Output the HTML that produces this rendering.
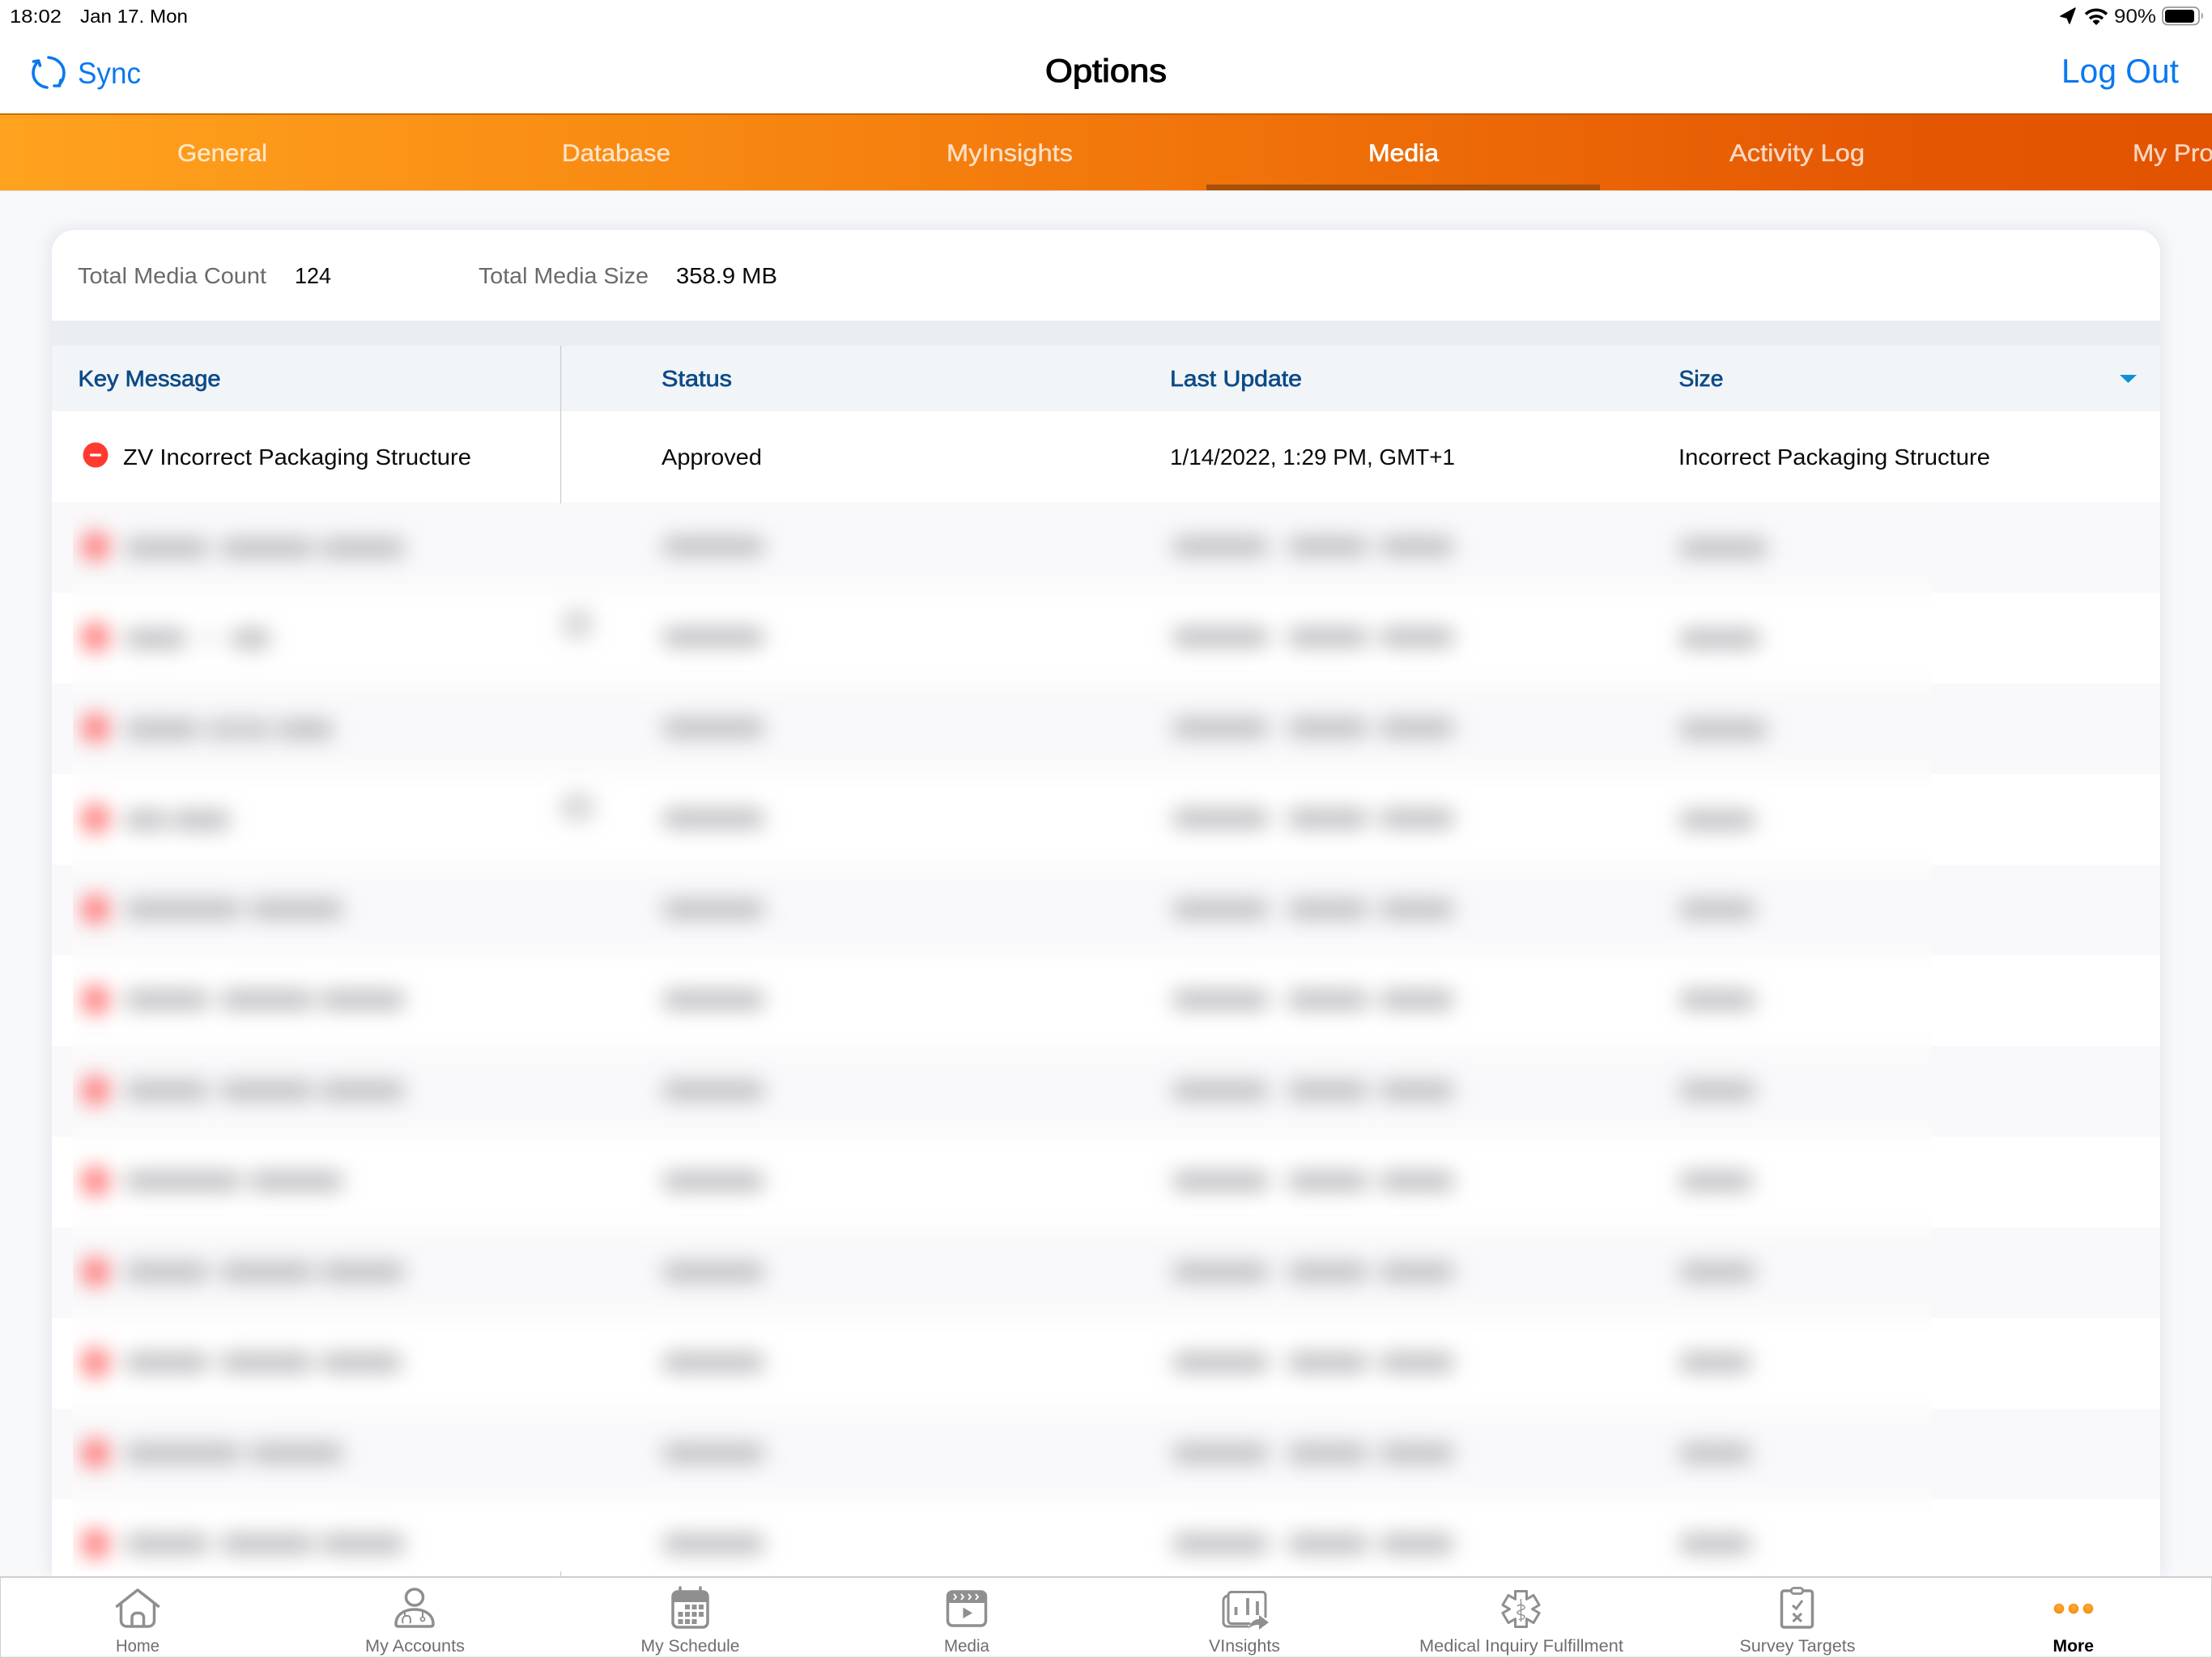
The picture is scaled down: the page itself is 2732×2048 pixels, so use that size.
<!DOCTYPE html>
<html lang="en"><head><meta charset="utf-8"><title>Options</title>
<style>
html,body{margin:0;padding:0;width:2732px;height:2048px;overflow:hidden;background:#f8f9fb}
svg{display:block}
text{font-family:"Liberation Sans",sans-serif}
.ic{fill:none;stroke:#8f8f8f;stroke-width:3.5;stroke-linecap:round;stroke-linejoin:round}
.tl{font-size:21px;fill:#6e6e6e}
.hd{font-size:28px;fill:#0c4b87;stroke:#0c4b87;stroke-width:.7}
.bd{font-size:28px;fill:#0a0a0a}
.st{font-size:28px;fill:#6a6a6a}
.tb{font-size:30px;fill:#fff;fill-opacity:.75;stroke:#fff;stroke-opacity:.55;stroke-width:.5}
</style></head><body>
<svg xmlns="http://www.w3.org/2000/svg" width="2732" height="2048" viewBox="0 0 2732 2048">
<defs>
<linearGradient id="o" x1="0" x2="1" y1="0" y2="0">
<stop offset="0" stop-color="#ffa31f"/><stop offset=".3" stop-color="#f88a12"/><stop offset=".6" stop-color="#ef6f09"/><stop offset=".88" stop-color="#e45602"/><stop offset="1" stop-color="#e35400"/>
</linearGradient>
<radialGradient id="dot" cx=".5" cy=".4" r=".6"><stop offset="0" stop-color="#ffae38"/><stop offset="1" stop-color="#f58a10"/></radialGradient>
<filter id="b" filterUnits="userSpaceOnUse" x="0" y="500" width="2732" height="1600"><feGaussianBlur stdDeviation="13"/></filter>
<filter id="b2" filterUnits="userSpaceOnUse" x="0" y="500" width="2732" height="1600"><feGaussianBlur stdDeviation="14"/></filter>
<filter id="sh" filterUnits="userSpaceOnUse" x="0" y="200" width="2732" height="1900"><feGaussianBlur stdDeviation="10"/></filter>
<clipPath id="cp"><rect x="90" y="622" width="2295" height="1319"/></clipPath>
<clipPath id="cc"><path d="M64 1947V312a28 28 0 0 1 28-28H2640a28 28 0 0 1 28 28V1947Z"/></clipPath>
<g id="co">
<circle cx="118" cy="0" r="17" fill="#ff6868" stroke="none"/>
<rect x="820" y="-10" width="122" height="20" rx="8" fill="#bebec1"/>
<rect x="1450" y="-10" width="115" height="20" rx="8" fill="#bebec1"/>
<rect x="1592" y="-10" width="96" height="20" rx="8" fill="#bebec1"/>
<rect x="1706" y="-10" width="88" height="20" rx="8" fill="#bebec1"/>
</g>
<g id="k1"><rect x="156" y="-10" width="100" height="20" rx="8" fill="#bebec1"/><rect x="274" y="-10" width="112" height="20" rx="8" fill="#bebec1"/><rect x="398" y="-10" width="100" height="20" rx="8" fill="#bebec1"/></g>
<g id="k2"><rect x="156" y="-10" width="140" height="20" rx="8" fill="#bebec1"/><rect x="310" y="-10" width="112" height="20" rx="8" fill="#bebec1"/></g>
</defs>

<!-- status and nav -->
<rect width="2732" height="140" fill="#fff"/>
<text x="12" y="28" font-size="23" fill="#000" textLength="64" lengthAdjust="spacingAndGlyphs">18:02</text>
<text x="99" y="28" font-size="23" fill="#000" textLength="133" lengthAdjust="spacingAndGlyphs">Jan 17. Mon</text>
<path d="M2545 20 2563 10 2556 29 2553 22Z" fill="#000" stroke="#000" stroke-width="1.5" stroke-linejoin="round"/>
<path d="M2576 17.500a19 19 0 0 1 26 0M2581 23a12 12 0 0 1 16 0" fill="none" stroke="#000" stroke-width="3.600"/>
<path d="M2584.500 26.500a6 6 0 0 1 9 0L2589 31Z" fill="#000"/>
<text x="2611" y="28" font-size="24" fill="#111" textLength="52" lengthAdjust="spacingAndGlyphs">90%</text>
<rect x="2671" y="9" width="45" height="21.500" rx="6" fill="none" stroke="#9a9a9a" stroke-width="1.800"/>
<rect x="2674" y="12" width="36" height="16" rx="3.500" fill="#000"/>
<path d="M2719 15.500c2.500 .8 2.500 7.200 0 8Z" fill="#9a9a9a"/>

<g fill="none" stroke="#0a78f0" stroke-width="3.600" stroke-linecap="round" stroke-linejoin="round">
<path d="M47 76C42 81 41 86 41 90 41 100 49 107 58 108"/>
<path d="M41.500 76 47.500 75 49.500 81"/>
<path d="M60 71C71 72 79 80 79 90 79 96 77 100 73 105"/>
<path d="M67 106 73.500 106 75 99"/>
</g>
<text x="96" y="103" font-size="37" fill="#0a78f0" textLength="78" lengthAdjust="spacingAndGlyphs">Sync</text>
<text x="1291" y="101" font-size="40" fill="#000" stroke="#000" stroke-width="1.100" textLength="150" lengthAdjust="spacingAndGlyphs">Options</text>
<text x="2546" y="102" font-size="42" fill="#0a78f0" textLength="145" lengthAdjust="spacingAndGlyphs">Log Out</text>

<!-- tabs -->
<rect y="140" width="2732" height="95" fill="url(#o)"/>
<rect y="140" width="2732" height="2" fill="#a85408" opacity=".65"/>
<rect y="235" width="2732" height="1" fill="#d9c4b0" opacity=".8"/>
<rect x="1490" y="228" width="486" height="7" fill="#a84f08"/>
<text class="tb" x="219" y="199" textLength="111" lengthAdjust="spacingAndGlyphs">General</text>
<text class="tb" x="694" y="199" textLength="134" lengthAdjust="spacingAndGlyphs">Database</text>
<text class="tb" x="1169" y="199" textLength="156" lengthAdjust="spacingAndGlyphs">MyInsights</text>
<text x="1690" y="199" font-size="30" fill="#fff" stroke="#fff" stroke-width=".7" textLength="87" lengthAdjust="spacingAndGlyphs">Media</text>
<text class="tb" x="2136" y="199" textLength="167" lengthAdjust="spacingAndGlyphs">Activity Log</text>
<text class="tb" x="2634" y="199" textLength="100" lengthAdjust="spacingAndGlyphs">My Pro</text>

<!-- page background shadow -->
<rect y="236" width="2732" height="1711" fill="#f8f9fb"/>
<path d="M60 1947V308a26 26 0 0 1 26-26H2646a26 26 0 0 1 26 26V1947Z" fill="#dfe2e7" filter="url(#sh)" opacity=".8"/>

<!-- card -->
<g clip-path="url(#cc)">
<rect x="64" y="284" width="2604" height="112" fill="#fff"/>
<rect x="64" y="396" width="2604" height="31" fill="#ebeef1"/>
<rect x="64" y="427" width="2604" height="81" fill="#f2f5f8"/>
<rect x="64" y="508" width="2604" height="1439" fill="#fff"/>
<g fill="#f9f9fb">
<rect x="64" y="620" width="2604" height="112"/><rect x="64" y="844" width="2604" height="112"/><rect x="64" y="1068" width="2604" height="112"/><rect x="64" y="1292" width="2604" height="112"/><rect x="64" y="1516" width="2604" height="112"/><rect x="64" y="1740" width="2604" height="112"/>
</g>
</g>

<text class="st" x="96" y="350" textLength="233" lengthAdjust="spacingAndGlyphs">Total Media Count</text>
<text class="bd" x="364" y="350" textLength="45" lengthAdjust="spacingAndGlyphs">124</text>
<text class="st" x="591" y="350" textLength="210" lengthAdjust="spacingAndGlyphs">Total Media Size</text>
<text class="bd" x="835" y="350" textLength="125" lengthAdjust="spacingAndGlyphs">358.9 MB</text>

<text class="hd" x="96.500" y="477" textLength="176" lengthAdjust="spacingAndGlyphs">Key Message</text>
<text class="hd" x="817" y="477" textLength="87" lengthAdjust="spacingAndGlyphs">Status</text>
<text class="hd" x="1445" y="477" textLength="163" lengthAdjust="spacingAndGlyphs">Last Update</text>
<text class="hd" x="2073.500" y="477" textLength="55" lengthAdjust="spacingAndGlyphs">Size</text>
<path d="M2618 463H2639L2628.500 473Z" fill="#0f8fd8"/>
<rect x="692" y="427" width="1.200" height="197" fill="#c8ccd0"/>

<circle cx="118" cy="562" r="15.500" fill="#ff3b30"/>
<rect x="111" y="560.500" width="14" height="3.200" rx="1.500" fill="#fff"/>
<text class="bd" x="152" y="574" textLength="430" lengthAdjust="spacingAndGlyphs">ZV Incorrect Packaging Structure</text>
<text class="bd" x="817" y="574" textLength="124" lengthAdjust="spacingAndGlyphs">Approved</text>
<text class="bd" x="1445" y="574" textLength="352" lengthAdjust="spacingAndGlyphs">1/14/2022, 1:29 PM, GMT+1</text>
<text class="bd" x="2073" y="574" textLength="385" lengthAdjust="spacingAndGlyphs">Incorrect Packaging Structure</text>

<!-- blurred rows -->
<g clip-path="url(#cp)">
<rect x="90" y="622" width="2295" height="1319" fill="#fff"/>
<g filter="url(#b2)" fill="#f9f9fb">
<rect x="0" y="600" width="2732" height="132"/><rect x="0" y="844" width="2732" height="112"/><rect x="0" y="1068" width="2732" height="112"/><rect x="0" y="1292" width="2732" height="112"/><rect x="0" y="1516" width="2732" height="112"/><rect x="0" y="1740" width="2732" height="112"/>
</g>
<g filter="url(#b)" stroke="#bebec1" stroke-width="4">
<use href="#co" y="675"/><use href="#k1" y="677"/><rect x="2076" y="667" width="105" height="20" rx="8" fill="#bebec1"/>
<use href="#co" y="787"/><rect x="156" y="779" width="72" height="20" rx="8" fill="#bebec1"/><rect x="245" y="783" width="30" height="12" rx="6" fill="#e6e6e6" stroke="none"/><rect x="288" y="779" width="44" height="20" rx="8" fill="#bebec1"/><rect x="2076" y="779" width="96" height="20" rx="8" fill="#bebec1"/>
<rect x="694" y="753" width="38" height="36" rx="12" fill="#d7d7d7" stroke="none"/>
<use href="#co" y="899"/><rect x="156" y="891" width="88" height="20" rx="8" fill="#bebec1"/><rect x="256" y="891" width="80" height="20" rx="8" fill="#cbcbce"/><rect x="346" y="891" width="64" height="20" rx="8" fill="#bebec1"/><rect x="2076" y="891" width="105" height="20" rx="8" fill="#bebec1"/>
<use href="#co" y="1011"/><rect x="156" y="1003" width="48" height="20" rx="8" fill="#bebec1"/><rect x="214" y="1003" width="68" height="20" rx="8" fill="#bebec1"/><rect x="2076" y="1003" width="90" height="20" rx="8" fill="#bebec1"/>
<rect x="692" y="980" width="42" height="34" rx="12" fill="#d7d7d7" stroke="none"/>
<use href="#co" y="1123"/><use href="#k2" y="1123"/><rect x="2076" y="1113" width="90" height="20" rx="8" fill="#bebec1"/>
<use href="#co" y="1235"/><use href="#k1" y="1235"/><rect x="2076" y="1225" width="90" height="20" rx="8" fill="#bebec1"/>
<use href="#co" y="1347"/><use href="#k1" y="1347"/><rect x="2076" y="1337" width="90" height="20" rx="8" fill="#bebec1"/>
<use href="#co" y="1459"/><use href="#k2" y="1459"/><rect x="2076" y="1449" width="87" height="20" rx="8" fill="#bebec1"/>
<use href="#co" y="1571"/><use href="#k1" y="1571"/><rect x="2076" y="1561" width="90" height="20" rx="8" fill="#bebec1"/>
<use href="#co" y="1683"/><rect x="156" y="1673" width="100" height="20" rx="8" fill="#bebec1"/><rect x="274" y="1673" width="110" height="20" rx="8" fill="#bebec1"/><rect x="398" y="1673" width="96" height="20" rx="8" fill="#bebec1"/><rect x="2076" y="1673" width="85" height="20" rx="8" fill="#bebec1"/>
<use href="#co" y="1795"/><use href="#k2" y="1795"/><rect x="2076" y="1785" width="85" height="20" rx="8" fill="#bebec1"/>
<use href="#co" y="1907"/><use href="#k1" y="1907"/><rect x="2076" y="1897" width="85" height="20" rx="8" fill="#bebec1"/>
</g>
</g>
<rect x="692" y="1941" width="1.200" height="6" fill="#c8ccd0"/>

<!-- bottom tab bar -->
<rect y="1947" width="2732" height="101" fill="#fff"/>
<rect y="1947" width="2732" height="2" fill="#cfcfcf"/>
<rect y="2046.500" width="2732" height="1.500" fill="#cfcfcf"/>
<rect y="1947" width="1" height="101" fill="#cfcfcf"/>
<rect x="2731" y="1947" width="1" height="101" fill="#cfcfcf"/>

<!-- home -->
<path class="ic" d="M144.500 1984 170 1964 195.500 1984M149.500 1981V2002a7 7 0 0 0 7 7H183.500a7 7 0 0 0 7-7V1981M163 2009V1998a5.500 5.500 0 0 1 5.500-5.500H172a5.500 5.500 0 0 1 5.500 5.500V2009"/>
<!-- accounts -->
<ellipse class="ic" cx="512" cy="1973" rx="10.500" ry="10"/>
<path class="ic" d="M489 2006C489 1994 500 1988 512 1988S535 1994 535 2006C535 2009 533 2009 531 2009H493C491 2009 489 2009 489 2006Z"/>
<path d="M500 1990V1996C496 1999 497 2004 498 2005M505 1996C508 1999 507 2004 506 2005M500 1996H505M522 1990V1998" fill="none" stroke="#8f8f8f" stroke-width="2"/>
<circle cx="522" cy="2000" r="2.500" fill="none" stroke="#8f8f8f" stroke-width="1.800"/>
<!-- schedule -->
<path d="M840 1961v6M865 1961v6" stroke="#8f8f8f" stroke-width="3.500" stroke-linecap="round"/>
<rect class="ic" x="831" y="1966" width="43" height="44" rx="6"/>
<path d="M830 1979V1971a6 6 0 0 1 6-6H869a6 6 0 0 1 6 6V1979Z" fill="#8f8f8f"/>
<g fill="#929292"><rect x="846" y="1982" width="6" height="6"/><rect x="854.500" y="1982" width="6" height="6"/><rect x="863" y="1982" width="6" height="6"/><rect x="837.500" y="1991" width="6" height="6"/><rect x="846" y="1991" width="6" height="6"/><rect x="854.500" y="1991" width="6" height="6"/><rect x="863" y="1991" width="6" height="6"/><rect x="837.500" y="2000" width="6" height="6"/><rect x="846" y="2000" width="6" height="6"/><rect x="854.500" y="2000" width="6" height="6"/></g>
<!-- media -->
<rect class="ic" x="1170.500" y="1966" width="47" height="42" rx="6"/>
<path d="M1169 1980V1971a6 6 0 0 1 6-6H1213a6 6 0 0 1 6 6V1980Z" fill="#8f8f8f"/>
<path d="M1178 1969l3 3.500-3 3.500M1187 1969l3 3.500-3 3.500M1196 1969l3 3.500-3 3.500M1205 1969l3 3.500-3 3.500" fill="none" stroke="#fff" stroke-width="1.800"/>
<path d="M1189.500 1985.500 1201 1992.500 1189.500 1999Z" fill="#8f8f8f"/>
<!-- vinsights -->
<path class="ic" d="M1543 2005.500H1521a4 4 0 0 1-4-4V1970.500a4 4 0 0 1 4-4H1559a4 4 0 0 1 4 4V1997" style="stroke-width:3"/>
<path class="ic" d="M1517 1971a6 6 0 0 0-6 6V2004a5 5 0 0 0 5 5H1541" style="stroke-width:3"/>
<path d="M1526.500 1995v-10M1541 1995v-21M1553 1995v-17" stroke="#929292" stroke-width="3.800" fill="none"/>
<path d="M1567 2004 1555 1995V2000C1549 2000 1544 2004 1542 2012 1546 2008 1550 2007 1555 2007V2013Z" fill="#8f8f8f"/>
<!-- medical -->
<path class="ic" transform="translate(1878.500 1987.500)" d="M-7-22 7-22 7-12.120 15.550-17.060 22.550-4.940 14 0 22.550 4.940 15.550 17.060 7 12.120 7 22-7 22-7 12.120-15.550 17.060-22.550 4.940-14 0-22.550-4.940-15.550-17.060-7-12.120Z" style="stroke-width:3"/>
<path d="M1878.500 1975V2003M1874 1984C1878 1980 1884 1984 1883 1986 1882 1989 1874 1989 1874 1992 1874 1995 1883 1994 1883 1997 1883 2000 1877 2001 1876 2000" fill="none" stroke="#8f8f8f" stroke-width="1.400"/>
<!-- survey -->
<rect class="ic" x="2200.500" y="1965" width="38" height="45" rx="3"/>
<rect x="2212.500" y="1961.500" width="14" height="7" rx="3" fill="#fff" stroke="#8f8f8f" stroke-width="2.800"/>
<path d="M2214 1983 2218.500 1987 2226 1977M2214.500 1993 2225 2003M2225 1993 2214.500 2003" fill="none" stroke="#8f8f8f" stroke-width="3"/>
<!-- more -->
<circle cx="2543" cy="1987" r="6.300" fill="url(#dot)"/><circle cx="2561" cy="1987" r="6.300" fill="url(#dot)"/><circle cx="2579" cy="1987" r="6.300" fill="url(#dot)"/>

<text class="tl" x="143" y="2040" textLength="54" lengthAdjust="spacingAndGlyphs">Home</text>
<text class="tl" x="451" y="2040" textLength="123" lengthAdjust="spacingAndGlyphs">My Accounts</text>
<text class="tl" x="791.500" y="2040" textLength="122" lengthAdjust="spacingAndGlyphs">My Schedule</text>
<text class="tl" x="1166" y="2040" textLength="56" lengthAdjust="spacingAndGlyphs">Media</text>
<text class="tl" x="1493" y="2040" textLength="88" lengthAdjust="spacingAndGlyphs">VInsights</text>
<text class="tl" x="1753" y="2040" textLength="252" lengthAdjust="spacingAndGlyphs">Medical Inquiry Fulfillment</text>
<text class="tl" x="2148.500" y="2040" textLength="143" lengthAdjust="spacingAndGlyphs">Survey Targets</text>
<text x="2535.500" y="2040" font-size="21" font-weight="700" fill="#000" textLength="50.500" lengthAdjust="spacingAndGlyphs">More</text>
</svg>
</body></html>
